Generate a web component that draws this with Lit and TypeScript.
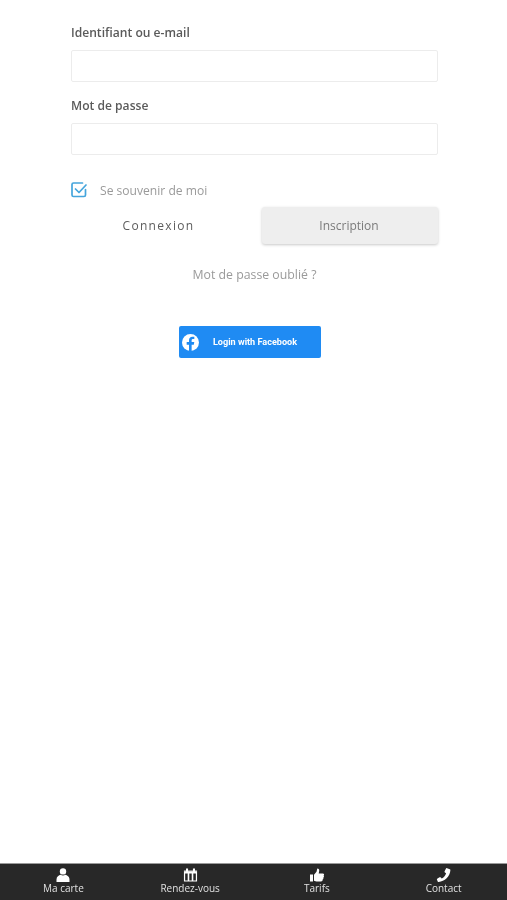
import { LitElement, html, css } from "lit";
import { customElement } from "lit/decorators.js";

const person = html`<svg viewBox="0 0 16 14" width="16" height="14"><circle cx="8" cy="3.4" r="3.2" fill="#fff"/><path d="M1.5 14v-2.600C1.500 8.600 4 7.200 5.600 6.800c1.300 1 3.500 1 4.800 0 1.600.4 4.100 1.800 4.100 4.600V14z" fill="#fff"/></svg>`;
const calendar = html`<svg viewBox="0 0 16 14" width="15" height="14"><path fill-rule="evenodd" fill="#fff" d="M1 1.800h2.200V0h2.200v1.800h5.200V0h2.200v1.800H15V14H1zM2.300 5.400v7.400h2.700V5.400zM6.700 5.400v7.400h2.600V5.400zM11 5.400v7.400h2.700V5.400z"/><path fill="#282828" d="M1 1.800h2.200v1.200H1zM5.400 1.800h5.200v1.200H5.400zM12.800 1.800H15v1.200h-2.200z" opacity="0.55"/></svg>`;
const thumb = html`<svg viewBox="0 0 16 14" width="16" height="14"><path fill="#fff" d="M1 6.500h3v7H1zM5 6.800 7.500 3.700 8.300.5c1.500 0 2.200 1.200 1.900 2.600L9.700 5.400h4.100c1.400 0 1.700 1.500.8 2.200.6.700.4 1.700-.3 2.100.3.800 0 1.500-.7 1.800.2 1.100-.5 2-1.600 2H8.500C7 13.500 6 13 5 12.700z"/></svg>`;
const phone = html`<svg viewBox="0 0 16 14" width="16" height="14"><path fill="#fff" d="M1.200 10.700 3.500 9.300c.5-.3 1-.2 1.300.2l.9 1.100c1.900-.9 3.700-3 4.400-5.300L8.900 4.500c-.4-.3-.5-.8-.3-1.300L10 .6c.2-.4.7-.6 1.100-.4l2.700 1c.4.200.6.500.6.900C14.200 8.300 8.500 13.800 2.600 14c-.4 0-.8-.2-.9-.6l-.8-1.800c-.1-.3 0-.7.3-.9z"/></svg>`;

const nav = [
  { icon: person, label: "Ma carte" },
  { icon: calendar, label: "Rendez-vous" },
  { icon: thumb, label: "Tarifs" },
  { icon: phone, label: "Contact" },
];

@customElement("app-root")
export class AppRoot extends LitElement {
  static styles = css`
    :host {
      display: flex;
      flex-direction: column;
      height: 900px;
      background: #fff;
      font-family: "Open Sans", sans-serif;
      color: #5e5e5e;
      overflow: hidden;
    }
    .page {
      flex: 1;
      min-height: 0;
      padding: 24px 69px 0 71px;
      display: flex;
      flex-direction: column;
      filter: blur(0.4px);
    }
    .label {
      font-size: 12.100px;
      font-weight: 600;
      line-height: 17px;
      color: #5a5a5a;
      margin-bottom: 9px;
    }
    .input {
      height: 32px;
      box-sizing: border-box;
      border: 1px solid #ececec;
      border-radius: 2px;
      background: #fff;
      margin-bottom: 15px;
    }
    .input.last {
      margin-bottom: 27px;
    }
    .remember {
      display: flex;
      align-items: center;
      gap: 13px;
      height: 16px;
      font-size: 12.100px;
      color: #9a9a9a;
    }
    .remember svg {
      display: block;
    }
    .actions {
      display: grid;
      grid-template-columns: 175px 176px;
      column-gap: 16px;
      margin-top: 9px;
    }
    .btn {
      height: 37px;
      display: flex;
      align-items: center;
      justify-content: center;
      font-size: 12px;
      border-radius: 3px;
    }
    .login {
      color: #5c5c5c;
      letter-spacing: 1.300px;
    }
    .signup {
      background: #eeeeee;
      color: #7a7a7a;
      box-shadow: 0 1px 3px rgba(0, 0, 0, 0.22);
      padding-right: 2px;
      box-sizing: border-box;
    }
    .forgot {
      margin-top: 22px;
      text-align: center;
      font-size: 12.300px;
      line-height: 17px;
      color: #9a9a9a;
    }
    .fb {
      align-self: flex-start;
      margin: 43px 0 0 108px;
      width: 142px;
      height: 32px;
      box-sizing: border-box;
      padding-left: 3px;
      display: flex;
      align-items: center;
      background: #1f8bf3;
      border-radius: 2px;
      color: #fff;
      font-family: Roboto, sans-serif;
      font-size: 9.100px;
      font-weight: 700;
    }
    .fb svg {
      display: block;
      flex: none;
    }
    .fb span {
      flex: 1;
      text-align: center;
      padding-right: 10px;
    }
    .bar {
      height: 37px;
      background: #282828;
      border-top: 1px solid #9a9a9a;
      box-sizing: border-box;
      display: grid;
      grid-template-columns: repeat(4, 1fr);
      filter: blur(0.4px);
    }
    .item {
      display: flex;
      flex-direction: column;
      align-items: center;
      padding-top: 4px;
      color: #e0e0e0;
      font-size: 10px;
      line-height: 12px;
    }
    .item svg {
      display: block;
    }
  `;

  render() {
    return html`
      <main class="page">
        <div class="label">Identifiant ou e-mail</div>
        <div class="input"></div>
        <div class="label">Mot de passe</div>
        <div class="input last"></div>
        <div class="remember">
          <svg viewBox="0 0 16 16" width="16" height="16" fill="none" stroke="#45a5dc" stroke-width="1.700" stroke-linecap="round" stroke-linejoin="round">
            <path d="M14.500 7.500v5.500a1.500 1.500 0 0 1-1.500 1.500H2.500A1.500 1.500 0 0 1 1 13V2.500A1.500 1.500 0 0 1 2.500 1h9" />
            <path d="M4.500 7 8 10.500l7-7.500" />
          </svg>
          <span>Se souvenir de moi</span>
        </div>
        <div class="actions">
          <div class="btn login">Connexion</div>
          <div class="btn signup">Inscription</div>
        </div>
        <div class="forgot">Mot de passe oublié ?</div>
        <div class="fb">
          <svg viewBox="0 0 24 24" width="17" height="17">
            <circle cx="12" cy="12" r="12" fill="#fff" />
            <path fill="#1f8bf3" d="M13.600 24v-9h3.100l.6-3.700h-3.700V9.200c0-1.100.5-2 2.100-2h1.700V4c-.7-.1-1.700-.2-2.700-.2-3 0-4.800 1.800-4.800 5v2.500H6.600V15h3.300v9z" />
          </svg>
          <span>Login with Facebook</span>
        </div>
      </main>
      <nav class="bar">
        ${nav.map((n) => html`<div class="item">${n.icon}<span>${n.label}</span></div>`)}
      </nav>
    `;
  }
}
